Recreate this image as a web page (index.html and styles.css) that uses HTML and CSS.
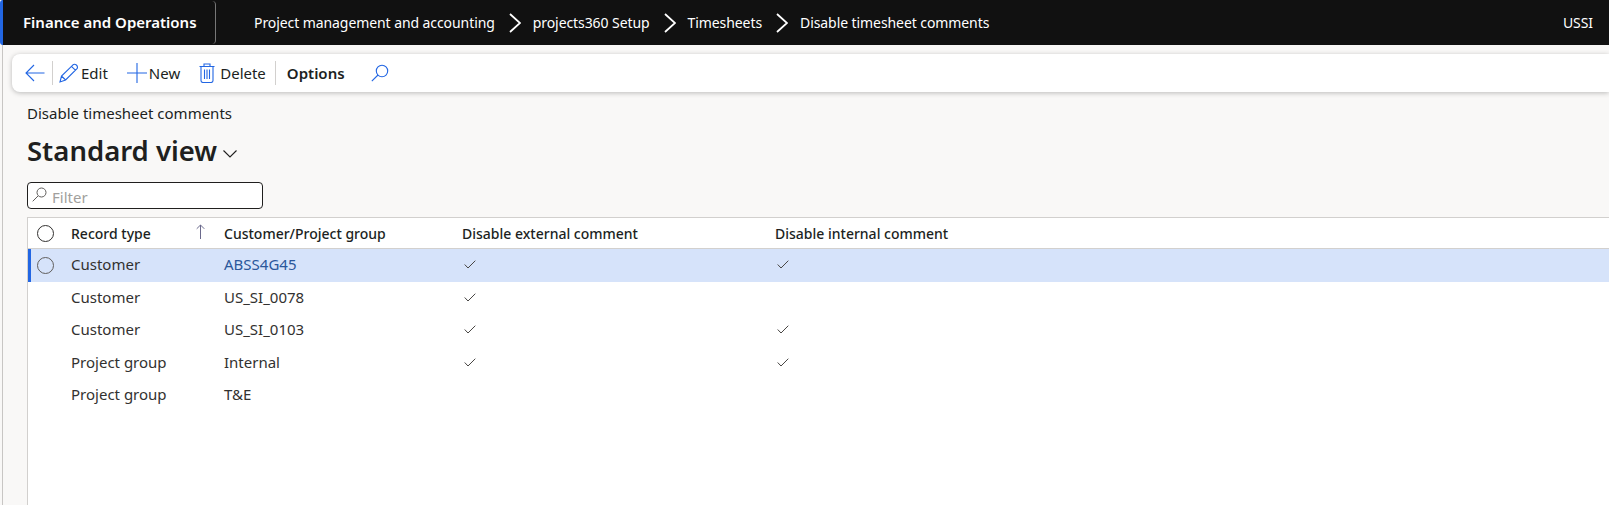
FILE: index.html
```html
<!DOCTYPE html>
<html lang="en">
<head>
    <meta charset="UTF-8">
    <title>Disable timesheet comments</title>
    <link rel="stylesheet" href="styles.css">
</head>
<body>
    <header class="nav">
        <div class="nav_brand">Finance and Operations</div>
        <nav class="nav_crumbs">
            <span>Project management and accounting</span>
            <svg class="nav_chevron" width="12" height="20" viewBox="0 0 12 20"><path d="M1 1 L11 10 L1 19"/></svg>
            <span>projects360 Setup</span>
            <svg class="nav_chevron" width="12" height="20" viewBox="0 0 12 20"><path d="M1 1 L11 10 L1 19"/></svg>
            <span>Timesheets</span>
            <svg class="nav_chevron" width="12" height="20" viewBox="0 0 12 20"><path d="M1 1 L11 10 L1 19"/></svg>
            <span>Disable timesheet comments</span>
        </nav>
        <div class="nav_company">USSI</div>
    </header>

    <main class="page">
        <div class="toolbar">
            <button class="tb_btn tb_back">
                <svg class="tb_icon" width="20" height="18" viewBox="0 0 20 18"><path d="M19.5 9 H1 M9 1 L1 9 L9 17"/></svg>
            </button>
            <span class="tb_sep"></span>
            <button class="tb_btn tb_edit">
                <svg class="tb_icon" width="20" height="20" viewBox="0 0 20 20"><path d="M1 19 L2.5 13 L14 1.8 Q15.5 .6 17.4 2 Q19.2 3.8 18 5.6 L6.6 17 Z M2.5 13 L6.6 17 M12.4 3.4 L16.4 7.2"/></svg>
                Edit
            </button>
            <button class="tb_btn tb_new">
                <svg class="tb_icon" width="20" height="20" viewBox="0 0 20 20"><path d="M10 0 V20 M0 10 H20"/></svg>
                New
            </button>
            <button class="tb_btn tb_delete">
                <svg class="tb_icon" width="16" height="20" viewBox="0 0 16 20"><path d="M.5 3.5 H15.5 M5 3.5 V1 H11 V3.5 M2 3.5 V17.5 Q2 19.5 4 19.5 H12 Q14 19.5 14 17.5 V3.5 M5.5 6.5 V16 M8 6.5 V16 M10.5 6.5 V16"/></svg>
                Delete
            </button>
            <span class="tb_sep"></span>
            <button class="tb_btn tb_options">Options</button>
            <button class="tb_btn tb_search">
                <svg class="tb_icon" width="18" height="18" viewBox="0 0 18 18"><circle cx="11" cy="7" r="5.7"/><path d="M7 11 L.8 17.2"/></svg>
            </button>
        </div>

        <div class="crumb_title">Disable timesheet comments</div>
        <div class="view_title">
            <h1>Standard view</h1>
            <svg class="view_chevron" width="14" height="8" viewBox="0 0 14 8"><path d="M.5 .5 L7 7 L13.5 .5"/></svg>
        </div>

        <div class="filter">
            <svg class="filter_icon" width="15" height="15" viewBox="0 0 15 15"><circle cx="9.5" cy="5.5" r="4.5"/><path d="M6 9 L.7 14.3"/></svg>
            <span class="filter_text">Filter</span>
        </div>

        <div class="grid">
            <div class="row row_head">
                <div class="cell_check"><span class="radio"></span></div>
                <div class="cell_type">Record type
                    <svg class="sort_arrow" width="9" height="15" viewBox="0 0 9 15"><path d="M4.5 15 V1 M.7 4.8 L4.5 1 L8.3 4.8"/></svg>
                </div>
                <div class="cell_group">Customer/Project group</div>
                <div class="cell_ext">Disable external comment</div>
                <div class="cell_int">Disable internal comment</div>
            </div>
            <div class="row row_selected">
                <div class="cell_check"><span class="radio"></span></div>
                <div class="cell_type">Customer</div>
                <div class="cell_group"><a class="link">ABSS4G45</a></div>
                <div class="cell_ext"><svg class="check" width="12" height="9" viewBox="0 0 12 9"><path d="M.7 4.5 L4 8 L11.3 .7"/></svg></div>
                <div class="cell_int"><svg class="check" width="12" height="9" viewBox="0 0 12 9"><path d="M.7 4.5 L4 8 L11.3 .7"/></svg></div>
            </div>
            <div class="row">
                <div class="cell_check"></div>
                <div class="cell_type">Customer</div>
                <div class="cell_group">US_SI_0078</div>
                <div class="cell_ext"><svg class="check" width="12" height="9" viewBox="0 0 12 9"><path d="M.7 4.5 L4 8 L11.3 .7"/></svg></div>
                <div class="cell_int"></div>
            </div>
            <div class="row">
                <div class="cell_check"></div>
                <div class="cell_type">Customer</div>
                <div class="cell_group">US_SI_0103</div>
                <div class="cell_ext"><svg class="check" width="12" height="9" viewBox="0 0 12 9"><path d="M.7 4.5 L4 8 L11.3 .7"/></svg></div>
                <div class="cell_int"><svg class="check" width="12" height="9" viewBox="0 0 12 9"><path d="M.7 4.5 L4 8 L11.3 .7"/></svg></div>
            </div>
            <div class="row">
                <div class="cell_check"></div>
                <div class="cell_type">Project group</div>
                <div class="cell_group">Internal</div>
                <div class="cell_ext"><svg class="check" width="12" height="9" viewBox="0 0 12 9"><path d="M.7 4.5 L4 8 L11.3 .7"/></svg></div>
                <div class="cell_int"><svg class="check" width="12" height="9" viewBox="0 0 12 9"><path d="M.7 4.5 L4 8 L11.3 .7"/></svg></div>
            </div>
            <div class="row">
                <div class="cell_check"></div>
                <div class="cell_type">Project group</div>
                <div class="cell_group">T&amp;E</div>
                <div class="cell_ext"></div>
                <div class="cell_int"></div>
            </div>
        </div>
    </main>
</body>
</html>
```

FILE: styles.css
```css
* {
    box-sizing: border-box;
}
html, body {
    height: 100%;
}
body {
    margin: 0;
    height: 505px;
    overflow: hidden;
    display: flex;
    flex-direction: column;
    background: #f9f8f7;
    font-family: "Noto Sans", "Open Sans", sans-serif;
    font-size: 15px;
    color: #323130;
}

/* top bar */
.nav {
    height: 45px;
    flex: none;
    display: flex;
    align-items: center;
    background: #111;
    color: #fff;
    font-size: 14px;
    letter-spacing: -0.08px;
    border-left: 3px solid #2266e3;
    border-radius: 3px 0 0 3px;
}
.nav_brand {
    width: 213px;
    height: 43px;
    padding-left: 20px;
    line-height: 43px;
    font-size: 15px;
    font-weight: 600;
    letter-spacing: 0;
    border-right: 1px solid #777;
    border-radius: 0 4px 4px 0;
}
.nav_crumbs {
    display: flex;
    align-items: center;
    margin-left: 38px;
}
.nav_chevron {
    margin: 0 12px 0 14px;
    fill: none;
    stroke: #fff;
    stroke-width: 1.8;
}
.nav_company {
    margin-left: auto;
    margin-right: 16px;
}

/* page */
.page {
    flex: 1;
    min-height: 0;
    display: flex;
    flex-direction: column;
    border-left: 1px solid #c8c6c4;
    margin-left: 2px;
    padding: 9px 0 0 9px;
}
.toolbar {
    height: 38px;
    flex: none;
    display: flex;
    align-items: center;
    background: #fff;
    border-radius: 8px 0 0 8px;
    box-shadow: 0 1px 5px rgba(0, 0, 0, 0.25);
    padding-left: 13px;
    color: #201f1e;
}
.tb_btn {
    display: flex;
    align-items: center;
    padding: 0;
    border: none;
    background: none;
    font: inherit;
    color: inherit;
}
.tb_icon {
    fill: none;
    stroke: #2266e3;
    stroke-width: 1.1;
}
.tb_sep {
    width: 1px;
    height: 24px;
    background: #d2d0ce;
}
.tb_back {
    margin-right: 7px;
}
.tb_edit {
    margin-left: 6px;
    gap: 2px;
}
.tb_new {
    margin-left: 19px;
    gap: 2px;
}
.tb_delete {
    margin-left: 19px;
    gap: 5px;
    margin-right: 9px;
}
.tb_options {
    margin-left: 11px;
    font-weight: 600;
}
.tb_search {
    margin-left: 26px;
}

.crumb_title {
    margin: 11px 0 0 15px;
    line-height: 20px;
    color: #201f1e;
}
.view_title {
    display: flex;
    align-items: center;
    margin: 9px 0 0 15px;
    height: 38px;
    color: #201f1e;
}
.view_title h1 {
    margin: 0;
    font-size: 27.5px;
    font-weight: 600;
    line-height: 36px;
}
.view_chevron {
    margin: 6px 0 0 6px;
    fill: none;
    stroke: #201f1e;
    stroke-width: 1.1;
}

.filter {
    width: 236px;
    height: 27px;
    flex: none;
    display: flex;
    align-items: center;
    margin: 12px 0 0 15px;
    padding: 2px 0 0 4px;
    background: #fff;
    border: 1px solid #201f1e;
    border-radius: 4px;
}
.filter_icon {
    fill: none;
    stroke: #605e5c;
    stroke-width: 1;
    margin-bottom: 4px;
}
.filter_text {
    margin-left: 5px;
    color: #a19f9d;
}

/* grid */
.grid {
    flex: 1;
    margin: 8px 0 0 15px;
    background: #fff;
    border-top: 1px solid #d2d0ce;
    border-left: 1px solid #d2d0ce;
}
.row {
    height: 32.5px;
    display: flex;
    align-items: center;
}
.row_head {
    height: 31px;
    border-bottom: 1px solid #d2d0ce;
    font-size: 14px;
    font-weight: 500;
    color: #201f1e;
}
.row_selected {
    height: 33px;
    background: #d6e3fa;
    box-shadow: inset 3px 0 0 #2266e3;
}
.cell_check {
    width: 43px;
    flex: none;
    display: flex;
    padding-left: 9px;
}
.cell_type {
    width: 153px;
    flex: none;
    display: flex;
    align-items: center;
    justify-content: space-between;
    padding-right: 19px;
}
.row:not(.row_head) .cell_type,
.row:not(.row_head) .cell_group {
    padding-bottom: 3px;
}
.cell_group {
    width: 238px;
    flex: none;
}
.cell_ext {
    width: 313px;
    flex: none;
}
.cell_int {
    flex: 1;
}
.radio {
    width: 17px;
    height: 17px;
    border: 1px solid #323130;
    border-radius: 50%;
}
.row_selected .radio {
    border-color: #605e5c;
}
.sort_arrow {
    fill: none;
    stroke: #6b6a8c;
    stroke-width: 1;
    margin-top: -4px;
}
.link {
    color: #2b579a;
}
.check {
    display: block;
    margin-left: 2px;
    margin-bottom: 2px;
    fill: none;
    stroke: #484644;
    stroke-width: 1;
}
```
